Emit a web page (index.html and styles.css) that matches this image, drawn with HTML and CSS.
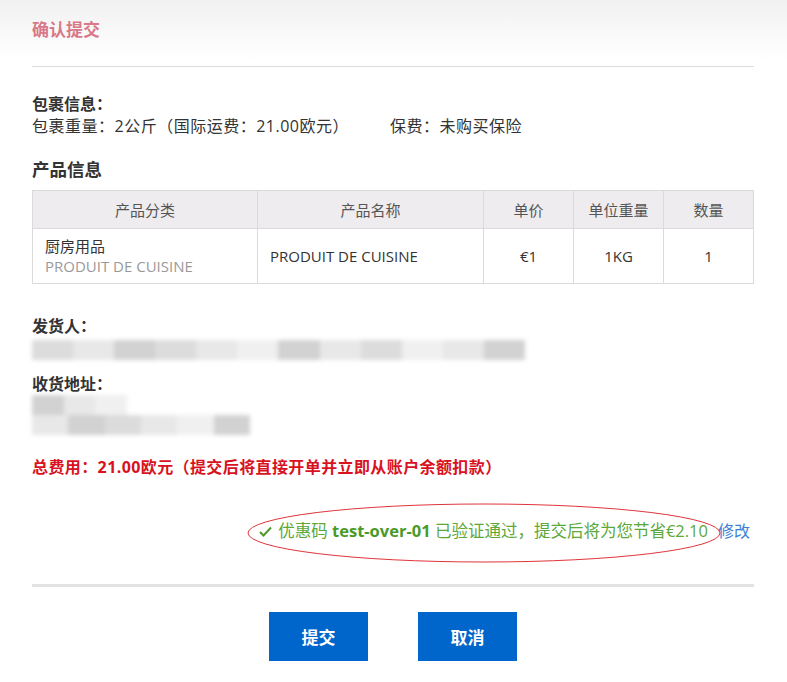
FILE: index.html
```html
<!DOCTYPE html>
<html>
<head>
    <meta charset="UTF-8">
    <title>确认提交</title>
    <link rel="stylesheet" href="styles.css">
</head>
<body>
    <div class="page">
        <div class="header">确认提交</div>

        <!-- 包裹信息 -->
        <div class="block-title">包裹信息：</div>
        <div class="pkg-line">
            <span class="pkg-weight">包裹重量：2公斤（国际运费：21.00欧元）</span>
            <span>保费：未购买保险</span>
        </div>

        <div class="section-title">产品信息</div>
        <table class="goods">
            <thead>
                <tr>
                    <th class="c1">产品分类</th>
                    <th class="c2">产品名称</th>
                    <th class="c3">单价</th>
                    <th class="c4">单位重量</th>
                    <th class="c5">数量</th>
                </tr>
            </thead>
            <tbody>
                <tr>
                    <td class="left">厨房用品<br><span class="sub">PRODUIT DE CUISINE</span></td>
                    <td class="left">PRODUIT DE CUISINE</td>
                    <td>€1</td>
                    <td>1KG</td>
                    <td>1</td>
                </tr>
            </tbody>
        </table>

        <div class="block-title sender">发货人：</div>
        <div class="masked one">
            <span class="px p1"></span><span class="px p2"></span><span class="px p3"></span><span class="px p1"></span>
            <span class="px p2"></span><span class="px p4"></span><span class="px p3"></span><span class="px p2"></span>
            <span class="px p1"></span><span class="px p4"></span><span class="px p2"></span><span class="px p3"></span>
        </div>

        <div class="block-title receiver">收货地址：</div>
        <div class="masked two">
            <div class="row short"><span class="px p3"></span><span class="px p2"></span><span class="px p4"></span></div>
            <div class="row"><span class="px p2"></span><span class="px p3"></span><span class="px p1"></span><span class="px p2"></span><span class="px p4"></span><span class="px p3"></span></div>
        </div>

        <div class="total">总费用：21.00欧元（提交后将直接开单并立即从账户余额扣款）</div>

        <div class="coupon">
            <svg class="ring" width="476" height="62" viewBox="0 0 476 62">
                <ellipse cx="238" cy="31" rx="236" ry="29" fill="none" stroke="#e0343c" stroke-width="1"/>
            </svg>
            <span class="ok">
                <svg class="tick" width="13" height="11" viewBox="0 0 13 11">
                    <path d="M1 6 L4.5 9.5 L12 1.5" fill="none" stroke="#4f9a2c" stroke-width="2"/>
                </svg>
                优惠码 <b>test-over-01</b> 已验证通过，提交后将为您节省€2.10
            </span>
            <a class="edit" href="#">修改</a>
        </div>

        <div class="actions">
            <button class="btn">提交</button>
            <button class="btn">取消</button>
        </div>
    </div>
</body>
</html>
```

FILE: styles.css
```css
* {
    box-sizing: border-box;
    margin: 0;
    padding: 0;
}

body {
    background: linear-gradient(#f1f1f1, #ffffff 60px);
    font-family: "Open Sans", "Noto Sans CJK SC", sans-serif;
    font-size: 16px;
    color: #333;
    min-height: 682px;
}

.page {
    padding: 0 33px 0 32px;
}

.header {
    height: 67px;
    padding-top: 19px;
    line-height: 22px;
    font-size: 17px;
    font-weight: bold;
    color: #d87888;
    border-bottom: 1px solid #dcdcdc;
}

.block-title {
    margin-top: 26px;
    line-height: 22px;
    font-weight: bold;
    color: #333;
}

.pkg-line {
    display: flex;
    line-height: 23px;
    letter-spacing: 0.5px;
}

.pkg-weight {
    width: 358px;
}

.section-title {
    margin-top: 20px;
    line-height: 22px;
    font-size: 17.5px;
    font-weight: bold;
}

.goods {
    width: 100%;
    margin-top: 10px;
    border-collapse: collapse;
    font-size: 15px;
}

.goods th,
.goods td {
    border: 1px solid #dadada;
    text-align: center;
    font-weight: normal;
}

.goods th {
    height: 38px;
    background: #eeecee;
    color: #555;
}

.goods td {
    height: 55px;
    line-height: 20px;
    color: #333;
}

.goods td.left {
    text-align: left;
    padding-left: 12px;
}

.goods .sub {
    color: #999;
}

.c1 { width: 225px; }
.c2 { width: 226px; }
.c3 { width: 90px; }
.c4 { width: 90px; }

.sender {
    margin-top: 31px;
}

.receiver {
    margin-top: 13px;
}

.masked {
    filter: blur(2px);
}

.masked.one {
    display: flex;
    margin-top: 3px;
    width: 493px;
    height: 20px;
}

.masked .row {
    display: flex;
    height: 20px;
    width: 218px;
}

.masked .row.short {
    width: 95px;
}

.px {
    flex: 1;
}

.p1 { background: #dcdcdc; }
.p2 { background: #e8e8e8; }
.p3 { background: #d2d2d2; }
.p4 { background: #f0f0f0; }

.total {
    margin-top: 21px;
    line-height: 22px;
    font-weight: bold;
    letter-spacing: 0.4px;
    color: #d8121e;
}

.coupon {
    position: relative;
    margin-top: 42px;
    display: flex;
    justify-content: flex-end;
    align-items: center;
    line-height: 22px;
    font-size: 16.5px;
    padding-right: 4px;
}

.ring {
    position: absolute;
    left: 214px;
    top: -18px;
}

.ok {
    color: #5ca83a;
}

.ok b {
    color: #4a9a28;
}

.tick {
    margin-right: 2px;
}

.edit {
    color: #3d7fd6;
    text-decoration: none;
    margin-left: 10px;
    font-size: 16px;
}

.actions {
    margin-top: 42px;
    border-top: 3px solid #e3e3e3;
    padding-top: 25px;
    display: flex;
    justify-content: center;
    gap: 50px;
}

.btn {
    width: 99px;
    height: 49px;
    border: none;
    background: #0066cc;
    color: #fff;
    font-family: "Noto Sans CJK SC", sans-serif;
    font-size: 17px;
    font-weight: bold;
    cursor: pointer;
}
```
